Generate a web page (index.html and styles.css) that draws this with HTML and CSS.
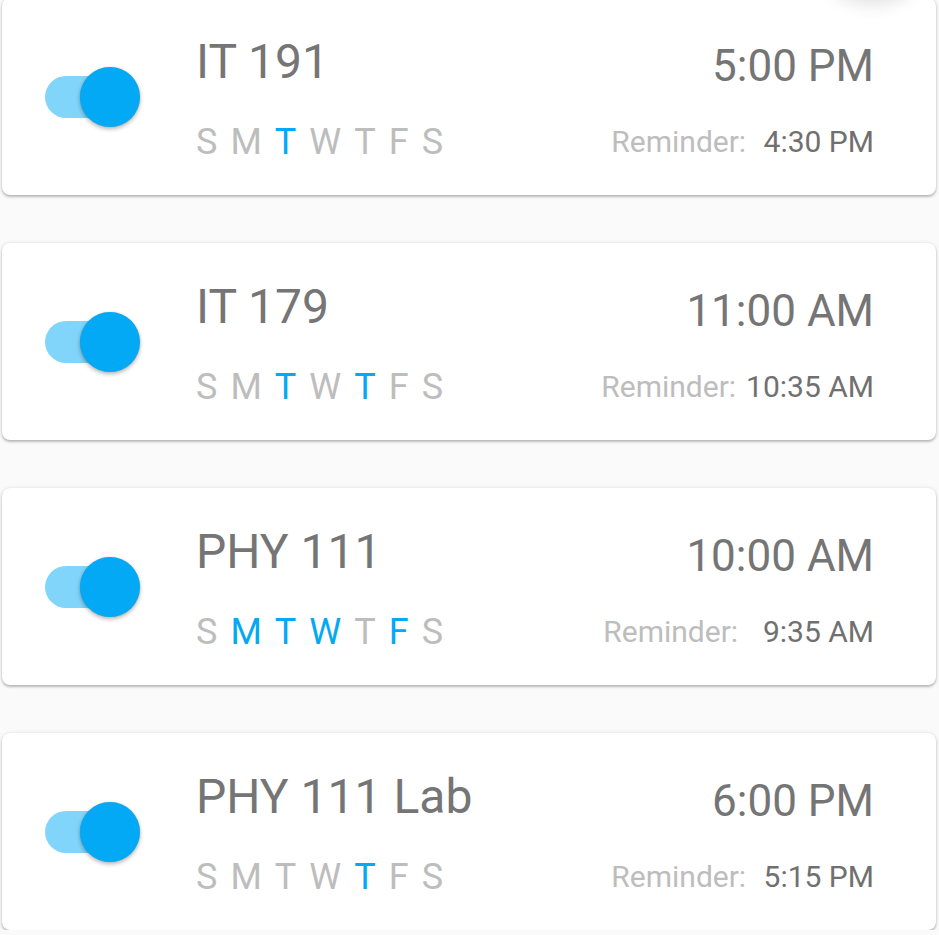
FILE: index.html
```html
<!DOCTYPE html>
<html>
<head>
<meta charset="utf-8">
<link rel="stylesheet" href="styles.css">
</head>
<body>
<div class="fab-shadow"></div>
<div class="list">
  <div class="card">
    <div class="switch"><span class="track"></span><span class="thumb"></span></div>
    <div class="info">
      <div class="title">IT 191</div>
      <div class="days"><span>S</span><span>M</span><span class="on">T</span><span>W</span><span>T</span><span>F</span><span>S</span></div>
    </div>
    <div class="times">
      <div class="time">5:00 PM</div>
      <div class="reminder"><span class="label">Reminder:</span><span class="value"> 4:30 PM</span></div>
    </div>
  </div>
  <div class="card">
    <div class="switch"><span class="track"></span><span class="thumb"></span></div>
    <div class="info">
      <div class="title">IT 179</div>
      <div class="days"><span>S</span><span>M</span><span class="on">T</span><span>W</span><span class="on">T</span><span>F</span><span>S</span></div>
    </div>
    <div class="times">
      <div class="time">11:00 AM</div>
      <div class="reminder"><span class="label">Reminder:</span><span class="value">10:35 AM</span></div>
    </div>
  </div>
  <div class="card">
    <div class="switch"><span class="track"></span><span class="thumb"></span></div>
    <div class="info">
      <div class="title">PHY 111</div>
      <div class="days"><span>S</span><span class="on">M</span><span class="on">T</span><span class="on">W</span><span>T</span><span class="on">F</span><span>S</span></div>
    </div>
    <div class="times">
      <div class="time">10:00 AM</div>
      <div class="reminder"><span class="label">Reminder:</span><span class="value">  9:35 AM</span></div>
    </div>
  </div>
  <div class="card">
    <div class="switch"><span class="track"></span><span class="thumb"></span></div>
    <div class="info">
      <div class="title">PHY 111 Lab</div>
      <div class="days"><span>S</span><span>M</span><span>T</span><span>W</span><span class="on">T</span><span>F</span><span>S</span></div>
    </div>
    <div class="times">
      <div class="time">6:00 PM</div>
      <div class="reminder"><span class="label">Reminder:</span><span class="value"> 5:15 PM</span></div>
    </div>
  </div>
</div>
</body>
</html>
```

FILE: styles.css
```css
html, body {
  margin: 0;
  padding: 0;
  background: #fafafa;
  font-family: Roboto, "Noto Sans", sans-serif;
  overflow: hidden;
}

.fab-shadow {
  position: absolute;
  top: -100px;
  right: 8px;
  width: 116px;
  height: 100px;
  border-radius: 50%;
  background: #fafafa;
  box-shadow: 0 6px 16px rgba(0, 0, 0, 0.1);
  z-index: 2;
}

.list {
  display: flex;
  flex-direction: column;
  gap: 48px;
  margin-top: -2px;
  padding: 0 3px 0 2px;
}

.card {
  height: 197px;
  box-sizing: border-box;
  background: #fff;
  border-radius: 8px;
  box-shadow: 0 2px 2px rgba(0, 0, 0, 0.16), 0 1px 4px rgba(0, 0, 0, 0.16), 0 0 1px rgba(0, 0, 0, 0.1);
  display: flex;
  padding: 0 62px 0 43px;
}

.switch {
  align-self: center;
  display: flex;
  align-items: center;
  width: 151px;
  flex: none;
}

.track {
  width: 80px;
  height: 42px;
  border-radius: 21px;
  background: #81d4fa;
}

.thumb {
  width: 60px;
  height: 60px;
  border-radius: 50%;
  background: #03a9f4;
  margin-left: -45px;
  box-shadow: 0 2px 4px rgba(0, 0, 0, 0.3), 0 0 1px rgba(0, 0, 0, 0.2);
}

.info {
  flex: 1;
  display: flex;
  flex-direction: column;
  padding-top: 40px;
}

.title {
  font-size: 48px;
  line-height: 48px;
  color: #757575;
}

.days {
  display: flex;
  gap: 13px;
  margin-top: 38px;
  font-size: 36px;
  line-height: 36px;
  color: #bdbdbd;
}

.days .on {
  color: #03a9f4;
}

.times {
  display: flex;
  flex-direction: column;
  align-items: flex-end;
  padding-top: 46px;
}

.time {
  font-size: 44px;
  line-height: 44px;
  color: #757575;
}

.reminder {
  margin-top: 39px;
  font-size: 30px;
  line-height: 30px;
  display: flex;
  gap: 10px;
  white-space: pre;
}

.reminder .label {
  color: #bdbdbd;
}

.reminder .value {
  color: #707070;
}
```
